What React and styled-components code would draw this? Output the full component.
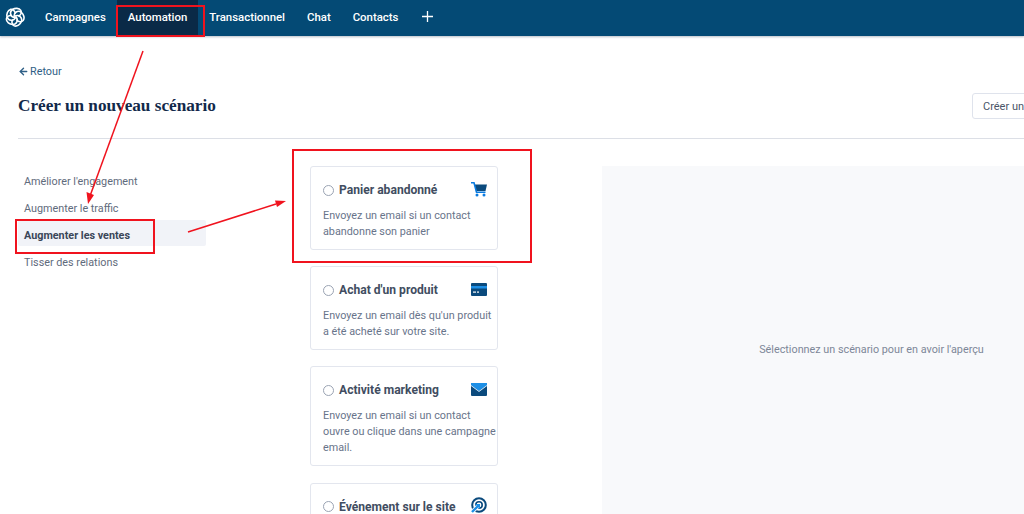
import React from "react";
import styled, { createGlobalStyle } from "styled-components";
import { ArrowLeft } from "lucide-react";

const GlobalStyle = createGlobalStyle`
  html, body {
    margin: 0;
    background: #fff;
    overflow: hidden;
  }
  body {
    font-family: Roboto, "Noto Sans", sans-serif;
    color: #3a4658;
  }
`;

const Page = styled.div`
  position: relative;
  width: 1024px;
  height: 514px;
  overflow: hidden;
`;

const TopBar = styled.nav`
  display: flex;
  align-items: stretch;
  height: 36px;
  background: #044a75;
  box-shadow: 0 1px 2px rgba(20, 40, 70, 0.3);
`;

const LogoSlot = styled.div`
  display: flex;
  align-items: center;
  box-sizing: border-box;
  width: 34px;
  padding: 0 0 2px 5px;
`;

const NavLink = styled.a`
  display: flex;
  align-items: center;
  padding: 0 11px 3px;
  font-size: 11.4px;
  font-weight: 500;
  color: #fff;
  background: ${(p) => (p.$active ? "#0a2a47" : "transparent")};
`;

const PlusGlyph = styled.svg`
  align-self: center;
  margin: 0 0 3px 13px;
`;

const Main = styled.main`
  width: 1123px;
  padding: 28px 0 0 18px;
`;

const BackLink = styled.a`
  display: flex;
  align-items: center;
  gap: 1px;
  height: 14px;
  font-size: 10.8px;
  color: #2f5f86;
`;

const HeaderRow = styled.header`
  display: flex;
  align-items: center;
  justify-content: space-between;
  height: 26px;
  margin-top: 15px;
  padding-right: 39px;
`;

const Title = styled.h1`
  margin: 0;
  font-family: "Liberation Serif", "DejaVu Serif", serif;
  font-size: 17.2px;
  font-weight: 700;
  color: #12294a;
`;

const CreateButton = styled.button`
  width: 130px;
  height: 26px;
  padding: 0 10px;
  text-align: left;
  font-family: inherit;
  font-size: 11px;
  color: #4a5568;
  background: #fff;
  border: 1px solid #dfe3ec;
  border-radius: 3px;
`;

const Divider = styled.hr`
  margin: 19px 0 27px;
  border: 0;
  border-top: 1px solid #dcdfe6;
`;

const Columns = styled.div`
  display: grid;
  grid-template-columns: 188px 188px 1fr;
  grid-template-rows: 366px;
  column-gap: 104px;
`;

const Sidebar = styled.ul`
  display: flex;
  flex-direction: column;
  gap: 1px;
  margin: 0;
  padding: 0;
  list-style: none;
`;

const SideItem = styled.li`
  height: 26px;
  padding: 9px 6px 0;
  box-sizing: border-box;
  line-height: 14px;
  font-size: 10.8px;
  font-weight: ${(p) => (p.$active ? 700 : 400)};
  color: ${(p) => (p.$active ? "#3a4658" : "#5f6b7c")};
  background: ${(p) => (p.$active ? "#f1f3f8" : "transparent")};
  border-radius: 2px;
`;

const CardList = styled.div`
  display: flex;
  flex-direction: column;
  gap: 16.5px;
  min-height: 0;
`;

const Card = styled.label`
  display: block;
  flex: none;
  box-sizing: border-box;
  padding: 14px 0 8.5px 12px;
  background: #fff;
  border: 1px solid #e3e6ee;
  border-radius: 3px;
`;

const CardHead = styled.div`
  display: flex;
  align-items: center;
  height: 18px;
  margin-bottom: 8.5px;
`;

const Radio = styled.span`
  width: 9px;
  height: 9px;
  margin-right: 5px;
  background: #fff;
  border: 1px solid #9aa3b3;
  border-radius: 50%;
`;

const CardTitle = styled.span`
  flex: 1;
  font-size: 12.1px;
  font-weight: 700;
  color: #414d61;
`;

const IconSlot = styled.span`
  display: flex;
  margin: 0 10px 2px 0;
`;

const CardText = styled.p`
  margin: 0;
  font-size: 10.8px;
  line-height: 16.3px;
  color: #68748a;
`;

const Preview = styled.section`
  display: flex;
  align-items: center;
  justify-content: center;
  font-size: 10.8px;
  color: #7d8798;
  background: #f8f9fb;
`;

const RedBox = styled.div`
  position: absolute;
  left: ${(p) => p.$x}px;
  top: ${(p) => p.$y}px;
  width: ${(p) => p.$w}px;
  height: ${(p) => p.$h}px;
  box-sizing: border-box;
  border: 2px solid #f0131e;
`;

const ArrowLayer = styled.svg`
  position: absolute;
  inset: 0;
`;

function Logo() {
  return (
    <svg width="20" height="20" viewBox="0 0 24 24" fill="none" stroke="#fff" strokeWidth="1.9">
      {[0, 72, 144, 216, 288].map((a) => (
        <path key={a} transform={`rotate(${a} 12 12)`} d="M12 13C6 12 5 6 9 3c3-2 8-2 10 1 1.500 2.500 0 6-3 7" />
      ))}
    </svg>
  );
}

function CartIcon() {
  return (
    <svg width="16" height="15" viewBox="0 0 16 15">
      <path d="M3.500 2.500H16L14.500 9H5z" fill="#0b4a7d" />
      <path d="M0 .8h3l2.500 9.500h9" fill="none" stroke="#0b7be0" strokeWidth="1.600" />
      <circle cx="6" cy="13" r="1.500" fill="#0b7be0" />
      <circle cx="13" cy="13" r="1.500" fill="#0b7be0" />
    </svg>
  );
}

function CreditCardIcon() {
  return (
    <svg width="16" height="13" viewBox="0 0 16 13">
      <rect width="16" height="13" rx="1" fill="#0b4a7d" />
      <rect y="3" width="16" height="2.500" fill="#1d8fe6" />
      <rect x="2" y="8.500" width="3" height="1.200" fill="#fff" />
      <rect x="6" y="8.500" width="2" height="1.200" fill="#fff" />
    </svg>
  );
}

function MailIcon() {
  return (
    <svg width="16" height="13" viewBox="0 0 16 13">
      <rect width="16" height="13" rx="1" fill="#0b4a7d" />
      <path d="M0 0h16v2.500L8 8.500 0 2.500z" fill="#1d8fe6" />
      <path d="M0 2.500l8 6 8-6" fill="none" stroke="#fff" strokeWidth=".8" />
    </svg>
  );
}

function TargetIcon() {
  return (
    <svg width="17" height="17" viewBox="0 0 17 17" fill="none">
      <circle cx="9" cy="8" r="6.800" stroke="#0b4a7d" strokeWidth="2" />
      <circle cx="9" cy="8" r="3.200" stroke="#0b4a7d" strokeWidth="1.600" />
      <path d="M9 8L1.500 15.500" stroke="#fff" strokeWidth="4" />
      <path d="M8.500 8.500L2 15" stroke="#1d8fe6" strokeWidth="2.400" />
      <path d="M5 7h5v5z" fill="#1d8fe6" />
    </svg>
  );
}

const navLinks = ["Campagnes", "Automation", "Transactionnel", "Chat", "Contacts"];

const goals = [
  "Améliorer l'engagement",
  "Augmenter le traffic",
  "Augmenter les ventes",
  "Tisser des relations",
];

const scenarios = [
  {
    title: "Panier abandonné",
    text: "Envoyez un email si un contact abandonne son panier",
    icon: <CartIcon />,
  },
  {
    title: "Achat d'un produit",
    text: "Envoyez un email dès qu'un produit a été acheté sur votre site.",
    icon: <CreditCardIcon />,
  },
  {
    title: "Activité marketing",
    text: "Envoyez un email si un contact ouvre ou clique dans une campagne email.",
    icon: <MailIcon />,
  },
  {
    title: "Événement sur le site",
    text: "Envoyez un email lorsqu'un contact effectue une action sur votre site.",
    icon: <TargetIcon />,
  },
];

export default function App() {
  return (
    <Page>
      <GlobalStyle />
      <TopBar>
        <LogoSlot>
          <Logo />
        </LogoSlot>
        {navLinks.map((label) => (
          <NavLink key={label} $active={label === "Automation"}>
            {label}
          </NavLink>
        ))}
        <PlusGlyph width="11" height="11" viewBox="0 0 11 11" stroke="#fff" strokeWidth="1.300">
          <path d="M5.500 0v11M0 5.500h11" />
        </PlusGlyph>
      </TopBar>
      <Main>
        <BackLink>
          <ArrowLeft size={11} strokeWidth={3} />
          Retour
        </BackLink>
        <HeaderRow>
          <Title>Créer un nouveau scénario</Title>
          <CreateButton>Créer un scénario</CreateButton>
        </HeaderRow>
        <Divider />
        <Columns>
          <Sidebar>
            {goals.map((goal) => (
              <SideItem key={goal} $active={goal === "Augmenter les ventes"}>
                {goal}
              </SideItem>
            ))}
          </Sidebar>
          <CardList>
            {scenarios.map((s) => (
              <Card key={s.title}>
                <CardHead>
                  <Radio />
                  <CardTitle>{s.title}</CardTitle>
                  <IconSlot>{s.icon}</IconSlot>
                </CardHead>
                <CardText>{s.text}</CardText>
              </Card>
            ))}
          </CardList>
          <Preview>Sélectionnez un scénario pour en avoir l'aperçu</Preview>
        </Columns>
      </Main>
      <RedBox $x={116} $y={5} $w={89} $h={32} />
      <RedBox $x={15} $y={219} $w={140} $h={35} />
      <RedBox $x={292} $y={149} $w={240} $h={114} />
      <ArrowLayer width="1024" height="514" fill="none">
        <path d="M143 51L90 196" stroke="#f0131e" strokeWidth="1.500" />
        <path d="M88 204L86.500 192 94 195z" fill="#f0131e" />
        <path d="M188 232L276 204" stroke="#f0131e" strokeWidth="1.500" />
        <path d="M286 201L275 200.500 277 207z" fill="#f0131e" />
      </ArrowLayer>
    </Page>
  );
}
